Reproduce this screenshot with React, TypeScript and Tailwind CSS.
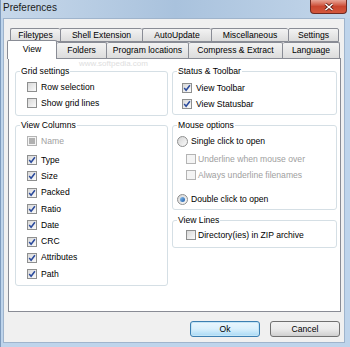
import React from "react";

type Row = { label: string; checked?: boolean; disabled?: boolean };

const Check = ({ checked, disabled }: { checked?: boolean; disabled?: boolean }) => (
  <span
    className={
      "w-[10px] h-[10px] border shrink-0 flex items-center justify-center " +
      (disabled
        ? "border-[#b4b4b4] bg-[#f4f4f4]"
        : "border-[#8e8f8f] bg-gradient-to-br from-[#d8d8d8] to-[#fbfbfb]")
    }
  >
    {disabled && checked && <span className="w-[6px] h-[6px] bg-[#b0b0b0]" />}
    {!disabled && checked && (
      <svg width="8" height="8" viewBox="0 0 8 8">
        <path d="M1.2 4.1 L3.1 6.3 L6.9 1.2" stroke="#2a4a9c" strokeWidth="1.5" fill="none" />
      </svg>
    )}
  </span>
);

const Radio = ({ checked }: { checked?: boolean }) => (
  <span className="w-[11px] h-[11px] rounded-full border border-[#8e8f8f] bg-gradient-to-br from-[#d4d4d4] to-[#fbfbfb] shrink-0 flex items-center justify-center">
    {checked && <span className="w-[5px] h-[5px] rounded-full bg-gradient-to-br from-[#8cc4f0] to-[#1c5aa8]" />}
  </span>
);

const CheckRow = ({ label, checked, disabled, h = "h-[16px]", mt = "" }: Row & { h?: string; mt?: string }) => (
  <div className={`flex items-center gap-[4px] pl-[11px] ${h} ${mt}`}>
    <Check checked={checked} disabled={disabled} />
    <span className={disabled ? "text-[#a0a0a0]" : "text-black"}>{label}</span>
  </div>
);

const Group = ({ title, h, children }: { title: string; h: string; children: React.ReactNode }) => (
  <div className={`border border-[#d5dfe5] rounded-[3px] flex flex-col ${h}`}>
    <span className="self-start -mt-[6px] ml-[4px] bg-white px-[1px] h-[10px] leading-[10px]">{title}</span>
    {children}
  </div>
);

const TabTop = ({ label, w }: { label: string; w: string }) => (
  <div
    className={`${w} h-[14px] border border-r-0 last:border-r border-[#898c95] rounded-t-[2px] bg-gradient-to-b from-[#f3f3f3] to-[#dcdcdc] flex items-center justify-center leading-none`}
  >
    {label}
  </div>
);

const TabBottom = ({ label, w, selected }: { label: string; w: string; selected?: boolean }) =>
  selected ? (
    <div
      className={`${w} h-[19px] -mb-[1px] relative z-10 border border-b-0 border-[#898c95] rounded-t-[2px] bg-white flex items-start pt-[4px] justify-center leading-none`}
    >
      {label}
    </div>
  ) : (
    <div
      className={`${w} h-[16px] border border-l-0 border-b-0 border-[#898c95] rounded-t-[2px] bg-gradient-to-b from-[#f3f3f3] to-[#dcdcdc] flex items-center justify-center leading-none`}
    >
      {label}
    </div>
  );

export default function App() {
  return (
    <div className="w-[350px] h-[347px] overflow-hidden bg-[#bed4eb] font-['Liberation_Sans',Arial,sans-serif] text-[8.6px] text-black flex flex-col border-l border-[#7e9bbd]">
      {/* title bar */}
      <div className="h-[18px] shrink-0 flex items-start justify-between bg-gradient-to-r from-[#c7d8ea] via-[#a9c2dd] to-[#c3d6ea]">
        <span className="pl-[2px] pt-[2px] text-[10px] leading-[12px] text-[#1b1b1b]">Preferences</span>
        <div className="mr-[3px] w-[37px] h-[14px] rounded-b-[4px] border border-t-0 border-[#6e2a22] bg-gradient-to-b from-[#e7a597] via-[#c9462f] to-[#d4573c] flex items-center justify-center">
          <svg width="10" height="8" viewBox="0 0 10 8">
            <path d="M1.5 1 L8.5 7 M8.5 1 L1.5 7" stroke="#5a1a12" strokeWidth="3" />
            <path d="M1.5 1 L8.5 7 M8.5 1 L1.5 7" stroke="#ffffff" strokeWidth="1.6" />
          </svg>
        </div>
      </div>

      {/* client */}
      <div className="ml-[2px] w-[342px] h-[325px] bg-[#f0f0f0] border border-[#9fb4cc] flex flex-col pl-[4px] pt-[9px]">
        {/* tabs */}
        <div className="w-[333px] flex flex-col">
          <div className="flex pl-[2px]">
            <TabTop label="Filetypes" w="w-[50px]" />
            <TabTop label="Shell Extension" w="w-[82px]" />
            <TabTop label="AutoUpdate" w="w-[69px]" />
            <TabTop label="Miscellaneous" w="w-[77px]" />
            <TabTop label="Settings" w="w-[51px]" />
          </div>
          <div className="flex items-end h-[16px] -ml-[1px]">
            <TabBottom label="View" w="w-[50px]" selected />
            <TabBottom label="Folders" w="w-[50px]" />
            <TabBottom label="Program locations" w="w-[82px]" />
            <TabBottom label="Compress & Extract" w="w-[94px]" />
            <TabBottom label="Language" w="w-[57px]" />
          </div>

          {/* panel */}
          <div className="relative h-[254px] border border-[#898c95] bg-white flex gap-[4px] pl-[6px] pt-[12px]">
            <span className="absolute left-[70px] top-[0px] text-[8px] leading-[9px] text-[#dedede]">www.softpedia.com</span>

            <div className="w-[153px] flex flex-col gap-[9px]">
              <Group title="Grid settings" h="h-[45px]">
                <CheckRow label="Row selection" mt="mt-[3px]" />
                <CheckRow label="Show grid lines" />
              </Group>
              <Group title="View Columns" h="h-[161px]">
                <CheckRow label="Name" checked disabled mt="mt-[3px]" />
                <CheckRow label="Type" checked mt="mt-[3px]" h="h-[16.3px]" />
                <CheckRow label="Size" checked h="h-[16.3px]" />
                <CheckRow label="Packed" checked h="h-[16.3px]" />
                <CheckRow label="Ratio" checked h="h-[16.3px]" />
                <CheckRow label="Date" checked h="h-[16.3px]" />
                <CheckRow label="CRC" checked h="h-[16.3px]" />
                <CheckRow label="Attributes" checked h="h-[16.3px]" />
                <CheckRow label="Path" checked h="h-[16.3px]" />
              </Group>
            </div>

            <div className="w-[165px] flex flex-col gap-[10px]">
              <Group title="Status & Toolbar" h="h-[44px]">
                <div className="flex items-center gap-[4px] pl-[9px] h-[16px] mt-[4px]">
                  <Check checked />
                  <span>View Toolbar</span>
                </div>
                <div className="flex items-center gap-[4px] pl-[9px] h-[16px]">
                  <Check checked />
                  <span>View Statusbar</span>
                </div>
              </Group>
              <Group title="Mouse options" h="h-[85px]">
                <div className="flex items-center gap-[3px] pl-[4px] h-[16px] mt-[3px]">
                  <Radio />
                  <span>Single click to open</span>
                </div>
                <div className="flex items-center gap-[2px] pl-[13px] h-[16px] mt-[2px]">
                  <Check disabled />
                  <span className="text-[#a0a0a0]">Underline when mouse over</span>
                </div>
                <div className="flex items-center gap-[2px] pl-[13px] h-[16px]">
                  <Check disabled />
                  <span className="text-[#a0a0a0]">Always underline filenames</span>
                </div>
                <div className="flex items-center gap-[3px] pl-[4px] h-[16px] mt-[8px]">
                  <Radio checked />
                  <span>Double click to open</span>
                </div>
              </Group>
              <Group title="View Lines" h="h-[28px]">
                <div className="flex items-center gap-[2px] pl-[13px] h-[16px] mt-[2px]">
                  <Check />
                  <span>Directory(ies) in ZIP archive</span>
                </div>
              </Group>
            </div>
          </div>
        </div>

        {/* buttons */}
        <div className="flex justify-end gap-[10px] pr-[4px] mt-[9px]">
          <button className="w-[70px] h-[16px] rounded-[3px] border border-[#3c7fb1] bg-gradient-to-b from-[#eaf6fd] via-[#d9f0fc] to-[#a7d9f5] shadow-[inset_0_0_0_1px_#c4e5f6] leading-none">
            Ok
          </button>
          <button className="w-[70px] h-[16px] rounded-[3px] border border-[#707070] bg-gradient-to-b from-[#f2f2f2] via-[#ebebeb] to-[#cfcfcf] leading-none">
            Cancel
          </button>
        </div>
      </div>
    </div>
  );
}
